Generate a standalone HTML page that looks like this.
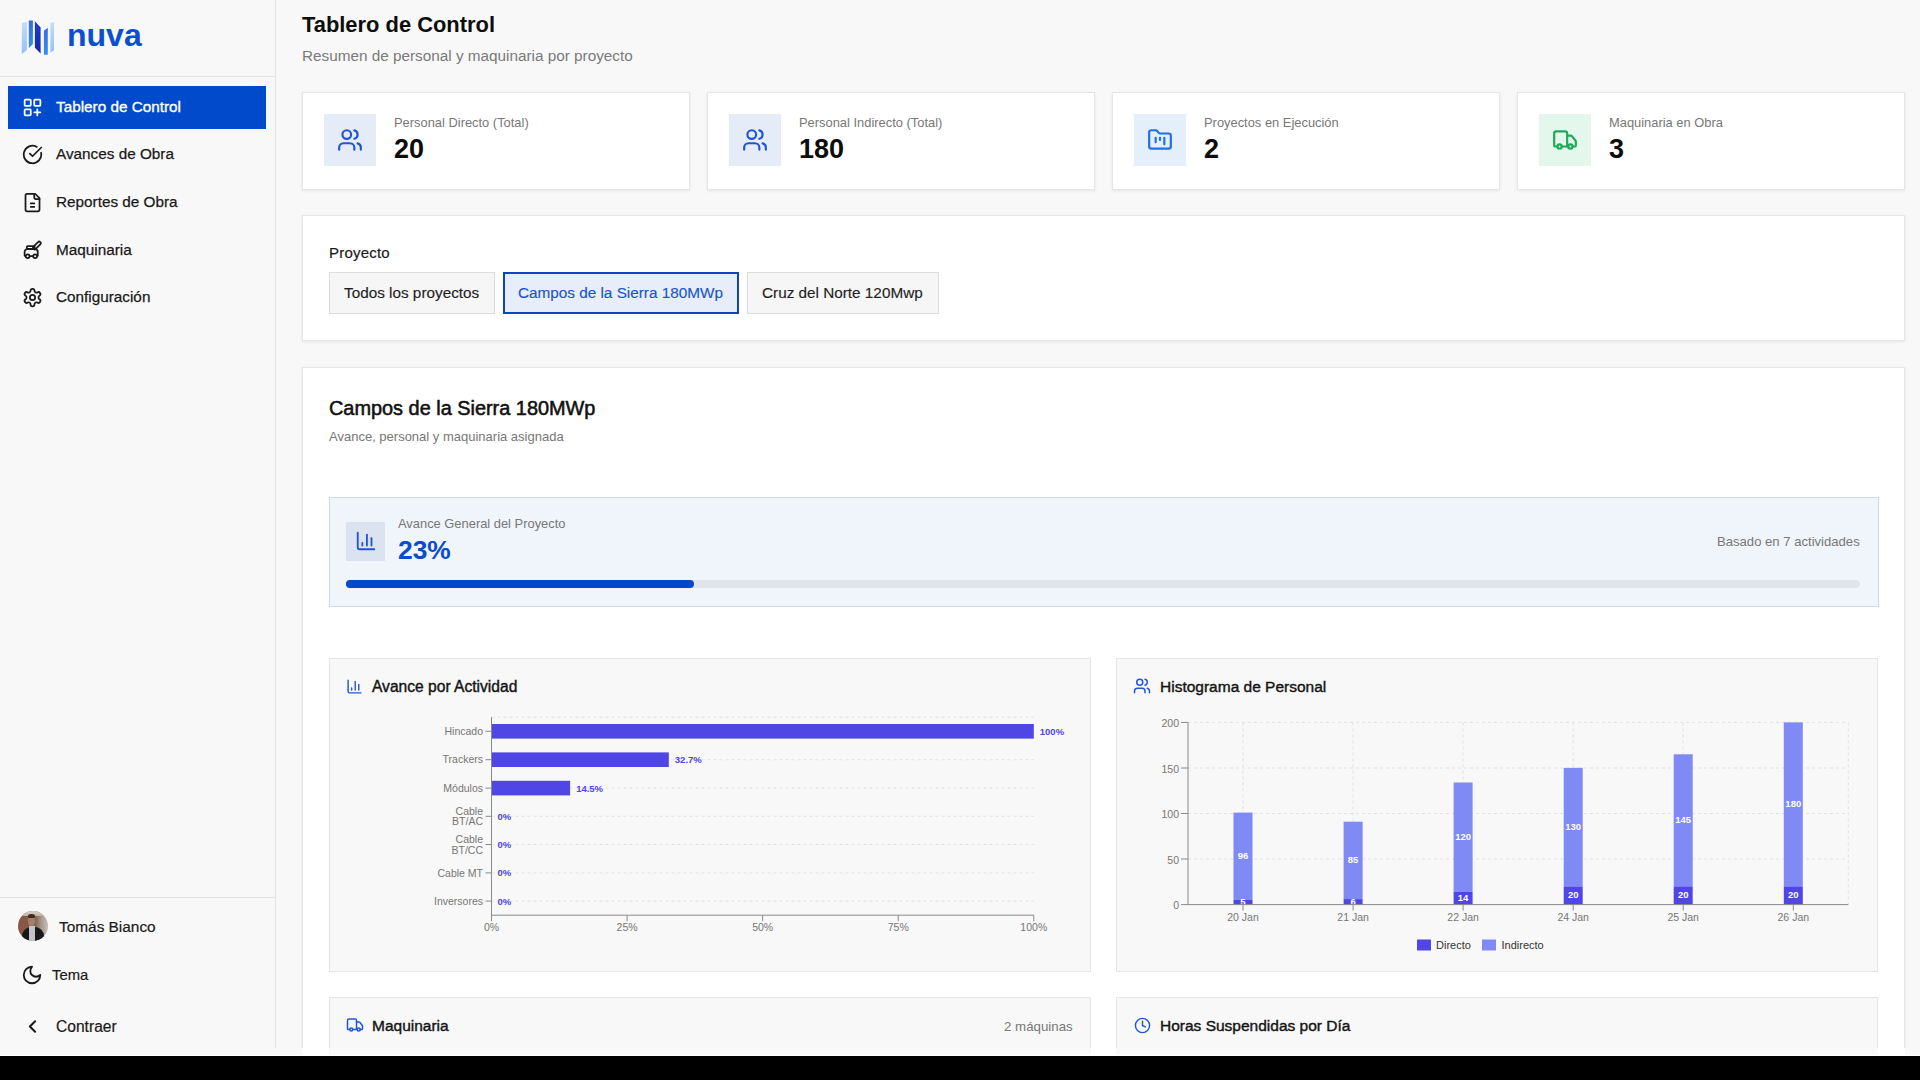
<!DOCTYPE html>
<html lang="es">
<head>
<meta charset="utf-8">
<title>Tablero de Control</title>
<style>
*{box-sizing:border-box;margin:0;padding:0}
html,body{width:1920px;height:1080px;overflow:hidden;background:#000}
body{font-family:"Liberation Sans",sans-serif;color:#141414;position:relative}
.abs{position:absolute}
.app{position:absolute;left:0;top:0;width:1920px;height:1056px;background:#f8f8f8;overflow:hidden}
.side{position:absolute;left:0;top:0;width:276px;height:1048px;border-right:1px solid #e4e4e4;background:#f8f8f8}
.side .hdr{position:absolute;left:0;top:0;width:275px;height:77px;border-bottom:1px solid #e4e4e4}
.nav{position:absolute;left:8px;width:258px;height:43px;color:#1a1a1a;font-size:15.3px;white-space:nowrap}
.nav svg{position:absolute;left:13.5px;top:11px;width:21px;height:21px}
.nav span{position:absolute;left:48px;top:12px;line-height:18px;-webkit-text-stroke:0.25px currentColor}
.nav.act span{-webkit-text-stroke:0.35px currentColor}
.nav.act{background:#004acb;color:#fff}
.txt{position:absolute;white-space:nowrap;line-height:1}
.card{position:absolute;background:#fff;border:1px solid #e6e6e6;box-shadow:0 1px 3px rgba(0,0,0,.08)}
.kpi{top:92px;width:388px;height:98px}
.kpi .ib{position:absolute;left:21px;top:21px;width:52px;height:52px;background:#e5ebf7}
.kpi .ib svg{position:absolute;left:13px;top:13px;width:26px;height:26px}
.kpi .lb{position:absolute;left:91px;top:22px;font-size:12.9px;color:#777;white-space:nowrap;line-height:15px}
.kpi .vl{position:absolute;left:91px;top:41px;font-size:27px;font-weight:700;color:#0d0d0d;white-space:nowrap;line-height:30px}
.btn{position:absolute;top:272px;height:42px;background:#f6f6f6;border:1px solid #dcdcdc;font-size:15.3px;color:#1f1f1f;white-space:nowrap;line-height:40px;padding-left:14px;-webkit-text-stroke:0.15px currentColor}
.btn.act{background:#e8eef9;border:2px solid #0b45c2;color:#1a55c8;line-height:38px;padding-left:13px}
</style>
</head>
<body>
<div class="app">
  <!-- SIDEBAR -->
  <div class="side">
    <div class="hdr">
      <svg class="abs" style="left:20px;top:19px" width="35" height="37" viewBox="0 0 35 37">
        <defs>
          <linearGradient id="lg1" x1="0" y1="0" x2="0" y2="1"><stop offset="0" stop-color="#c4defa"/><stop offset="1" stop-color="#94c0f6"/></linearGradient>
          <linearGradient id="lg2" x1="0" y1="0" x2="0" y2="1"><stop offset="0" stop-color="#2f6fe3"/><stop offset="1" stop-color="#3a8af0"/></linearGradient>
          <linearGradient id="lg3" x1="0" y1="0" x2="0" y2="1"><stop offset="0" stop-color="#1c3fc4"/><stop offset="1" stop-color="#1426a8"/></linearGradient>
        </defs>
        <polygon points="2,4 7,3.1 7,31 1.7,35" fill="url(#lg1)"/>
        <polygon points="8.8,1.5 12.9,1.5 12.9,25.1 8.8,29.2" fill="url(#lg2)"/>
        <polygon points="14.9,2.3 20.6,8.4 20.6,34.5 14.9,28.8" fill="url(#lg3)"/>
        <polygon points="23.9,11.7 27.8,8.8 27.8,35.7 23.9,35.7" fill="url(#lg2)"/>
        <polygon points="30.4,4 34,3.1 34,31 30.4,33.7" fill="url(#lg1)"/>
      </svg>
      <div class="txt" style="left:67px;top:19px;font-size:32px;font-weight:700;color:#0a4fd0;letter-spacing:0">nuva</div>
    </div>
    <div class="nav act" style="top:86px">
      <svg viewBox="0 0 24 24" fill="none" stroke="#fff" stroke-width="2" stroke-linecap="round" stroke-linejoin="round"><rect x="3" y="3" width="7" height="7" rx="1"/><rect x="14" y="3" width="7" height="7" rx="1"/><rect x="3" y="14" width="7" height="7" rx="1"/><path d="M14 17.5h7M17.5 14v7"/></svg>
      <span>Tablero de Control</span>
    </div>
    <div class="nav" style="top:133px">
      <svg viewBox="0 0 24 24" fill="none" stroke="#1a1a1a" stroke-width="2" stroke-linecap="round" stroke-linejoin="round"><path d="M21.8 10A10 10 0 1 1 17 3.34"/><path d="m9 11 3 3L22 4"/></svg>
      <span>Avances de Obra</span>
    </div>
    <div class="nav" style="top:181px">
      <svg viewBox="0 0 24 24" fill="none" stroke="#1a1a1a" stroke-width="2" stroke-linecap="round" stroke-linejoin="round"><path d="M15 2H6a2 2 0 0 0-2 2v16a2 2 0 0 0 2 2h12a2 2 0 0 0 2-2V7Z"/><path d="M14 2v4a2 2 0 0 0 2 2h4"/><path d="M10 13h4M10 17h4"/></svg>
      <span>Reportes de Obra</span>
    </div>
    <div class="nav" style="top:228.5px">
      <svg viewBox="0 0 24 24" fill="none" stroke="#1a1a1a" stroke-width="2" stroke-linecap="round" stroke-linejoin="round"><rect x="5.5" y="7" width="9" height="3" rx="1"/><path d="M3 18v-4.5a3 3 0 0 1 3-3h9a3 3 0 0 1 3 3V18"/><circle cx="6.5" cy="18.5" r="2.2"/><circle cx="15" cy="18.5" r="2.2"/><path d="M8.7 18.5h4"/><rect x="15.2" y="0.8" width="3.6" height="11" rx="1.8" transform="rotate(45 17 6.3)"/></svg>
      <span>Maquinaria</span>
    </div>
    <div class="nav" style="top:275.5px">
      <svg viewBox="0 0 24 24" fill="none" stroke="#1a1a1a" stroke-width="2" stroke-linecap="round" stroke-linejoin="round"><path d="M12.22 2h-.44a2 2 0 0 0-2 2v.18a2 2 0 0 1-1 1.73l-.43.25a2 2 0 0 1-2 0l-.15-.08a2 2 0 0 0-2.73.73l-.22.38a2 2 0 0 0 .73 2.73l.15.1a2 2 0 0 1 1 1.72v.51a2 2 0 0 1-1 1.74l-.15.09a2 2 0 0 0-.73 2.73l.22.38a2 2 0 0 0 2.73.73l.15-.08a2 2 0 0 1 2 0l.43.25a2 2 0 0 1 1 1.73V20a2 2 0 0 0 2 2h.44a2 2 0 0 0 2-2v-.18a2 2 0 0 1 1-1.73l.43-.25a2 2 0 0 1 2 0l.15.08a2 2 0 0 0 2.73-.73l.22-.39a2 2 0 0 0-.73-2.73l-.15-.08a2 2 0 0 1-1-1.74v-.5a2 2 0 0 1 1-1.74l.15-.09a2 2 0 0 0 .73-2.73l-.22-.38a2 2 0 0 0-2.73-.73l-.15.08a2 2 0 0 1-2 0l-.43-.25a2 2 0 0 1-1-1.73V4a2 2 0 0 0-2-2z"/><circle cx="12" cy="12" r="3"/></svg>
      <span>Configuración</span>
    </div>
    <!-- bottom -->
    <div class="abs" style="left:0;top:897px;width:275px;border-top:1px solid #e4e4e4"></div>
    
    <div class="abs" style="left:17.5px;top:911px;width:30px;height:30px;border-radius:50%;overflow:hidden;background:linear-gradient(90deg,#8c5646 0,#7d5a48 55%,#a89a8e 78%,#c4bdb6 100%)"><div class="abs" style="left:0;top:0;width:30px;height:30px;filter:blur(0.5px)">
      <div class="abs" style="left:0;top:0;width:30px;height:5px;background:linear-gradient(180deg,#d8d2ca,#bfb0a2)"></div>
      <div class="abs" style="left:10.5px;top:5px;width:7px;height:10px;border-radius:40%;background:#a47e68"></div>
      <div class="abs" style="left:10.5px;top:2.5px;width:7px;height:4px;border-radius:50% 50% 20% 20%;background:#3b2b22"></div>
      <div class="abs" style="left:4px;top:15.5px;width:22px;height:16px;border-radius:9px 9px 0 0;background:#19191d"></div>
      <div class="abs" style="left:11.5px;top:15px;width:5.5px;height:16px;background:#c4c4c8"></div>
    </div></div>
    <div class="txt" style="left:59px;top:919px;font-size:15.4px;color:#1a1a1a;-webkit-text-stroke:0.2px #1a1a1a">Tomás Bianco</div>
    <svg class="abs" style="left:21px;top:963.5px" width="22" height="22" viewBox="0 0 24 24" fill="none" stroke="#1a1a1a" stroke-width="2" stroke-linecap="round" stroke-linejoin="round"><path d="M12 3a6 6 0 0 0 9 9 9 9 0 1 1-9-9Z"/></svg>
    <div class="txt" style="left:52px;top:968px;font-size:14.8px;color:#1a1a1a;-webkit-text-stroke:0.2px #1a1a1a">Tema</div>
    <svg class="abs" style="left:21.5px;top:1016px" width="21" height="21" viewBox="0 0 24 24" fill="none" stroke="#1a1a1a" stroke-width="2.3" stroke-linecap="round" stroke-linejoin="round"><path d="m15 18-6-6 6-6"/></svg>
    <div class="txt" style="left:56px;top:1019px;font-size:15.6px;color:#1a1a1a;-webkit-text-stroke:0.2px #1a1a1a">Contraer</div>

  </div>

  <!-- HEADER -->
  <div class="txt" style="left:302px;top:14px;font-size:21.9px;font-weight:700;color:#0d0d0d">Tablero de Control</div>
  <div class="txt" style="left:302px;top:48px;font-size:15.3px;color:#7a7a7a">Resumen de personal y maquinaria por proyecto</div>

  <!-- KPI CARDS -->
  
  <div class="card kpi" style="left:302px"><div class="ib"><svg viewBox="0 0 24 24" fill="none" stroke="#1f56d6" stroke-width="2" stroke-linecap="round" stroke-linejoin="round"><path d="M16 21v-2a4 4 0 0 0-4-4H6a4 4 0 0 0-4 4v2"/><circle cx="9" cy="7" r="4"/><path d="M22 21v-2a4 4 0 0 0-3-3.87"/><path d="M16 3.13a4 4 0 0 1 0 7.75"/></svg></div><div class="lb">Personal Directo (Total)</div><div class="vl">20</div></div>
  <div class="card kpi" style="left:707px"><div class="ib"><svg viewBox="0 0 24 24" fill="none" stroke="#1f56d6" stroke-width="2" stroke-linecap="round" stroke-linejoin="round"><path d="M16 21v-2a4 4 0 0 0-4-4H6a4 4 0 0 0-4 4v2"/><circle cx="9" cy="7" r="4"/><path d="M22 21v-2a4 4 0 0 0-3-3.87"/><path d="M16 3.13a4 4 0 0 1 0 7.75"/></svg></div><div class="lb">Personal Indirecto (Total)</div><div class="vl">180</div></div>
  <div class="card kpi" style="left:1112px"><div class="ib" style="background:#e5eefb"><svg viewBox="0 0 24 24" fill="none" stroke="#1f6fe6" stroke-width="2" stroke-linecap="round" stroke-linejoin="round"><path d="M4 20h16a2 2 0 0 0 2-2V8a2 2 0 0 0-2-2h-7.93a2 2 0 0 1-1.66-.9l-.82-1.2A2 2 0 0 0 7.93 3H4a2 2 0 0 0-2 2v13c0 1.1.9 2 2 2Z"/><path d="M8 10v4M12 10v2M16 10v6"/></svg></div><div class="lb">Proyectos en Ejecución</div><div class="vl">2</div></div>
  <div class="card kpi" style="left:1517px"><div class="ib" style="background:#e3f7ed"><svg viewBox="0 0 24 24" fill="none" stroke="#1faa58" stroke-width="2" stroke-linecap="round" stroke-linejoin="round"><path d="M14 18V6a2 2 0 0 0-2-2H4a2 2 0 0 0-2 2v11a1 1 0 0 0 1 1h2"/><path d="M15 18H9"/><path d="M19 18h2a1 1 0 0 0 1-1v-3.65a1 1 0 0 0-.22-.62L18.3 8.38A1 1 0 0 0 17.52 8H14"/><circle cx="17" cy="18" r="2"/><circle cx="7" cy="18" r="2"/></svg></div><div class="lb">Maquinaria en Obra</div><div class="vl">3</div></div>


  <!-- FILTER -->
  
  <div class="card" style="left:302px;top:215px;width:1603px;height:126px"></div>
  <div class="txt" style="left:329px;top:244.5px;font-size:15px;letter-spacing:0.2px;color:#1a1a1a;-webkit-text-stroke:0.2px #1a1a1a">Proyecto</div>
  <div class="btn" style="left:329px;width:166px">Todos los proyectos</div>
  <div class="btn act" style="left:503px;width:236px">Campos de la Sierra 180MWp</div>
  <div class="btn" style="left:747px;width:192px">Cruz del Norte 120Mwp</div>


  <!-- SECTION -->
  
  <div class="card" style="left:302px;top:367px;width:1603px;height:720px"></div>
  <div class="txt" style="left:329px;top:398.5px;font-size:19.9px;color:#111;-webkit-text-stroke:0.55px #111">Campos de la Sierra 180MWp</div>
  <div class="txt" style="left:329px;top:430px;font-size:13px;color:#777">Avance, personal y maquinaria asignada</div>
  <!-- progress panel -->
  <div class="abs" style="left:329px;top:497px;width:1550px;height:110px;background:#f0f4fb;border:1px solid #ccd8ea"></div>
  <div class="abs" style="left:346px;top:522px;width:39px;height:39px;background:#dbe3f0"></div>
  <svg class="abs" style="left:355px;top:530px" width="22" height="22" viewBox="0 0 24 24" fill="none" stroke="#1f56d6" stroke-width="2" stroke-linecap="round" stroke-linejoin="round"><path d="M3 3v16a2 2 0 0 0 2 2h16"/><path d="M18 17V9"/><path d="M13 17V5"/><path d="M8 17v-3"/></svg>
  <div class="txt" style="left:398px;top:517.5px;font-size:12.9px;color:#777">Avance General del Proyecto</div>
  <div class="txt" style="left:398px;top:537px;font-size:26.4px;font-weight:700;color:#0b4bcf">23%</div>
  <div class="txt" style="left:1717px;top:534.5px;font-size:13.1px;color:#777">Basado en 7 actividades</div>
  <div class="abs" style="left:346px;top:580px;width:1514px;height:8px;border-radius:4px;background:#e1e4ea"></div>
  <div class="abs" style="left:346px;top:580px;width:348px;height:8px;border-radius:4px;background:#0448cc"></div>
  <!-- chart cards -->
  <div class="abs" style="left:329px;top:658px;width:762px;height:314px;background:#f8f8f8;border:1px solid #e5e5e5"></div>
  <div class="abs" style="left:1116px;top:658px;width:762px;height:314px;background:#f8f8f8;border:1px solid #e5e5e5"></div>
  <svg class="abs" style="left:346px;top:678px" width="17" height="17" viewBox="0 0 24 24" fill="none" stroke="#1f56d6" stroke-width="2" stroke-linecap="round" stroke-linejoin="round"><path d="M3 3v16a2 2 0 0 0 2 2h16"/><path d="M18 17V9"/><path d="M13 17V5"/><path d="M8 17v-3"/></svg>
  <div class="txt" style="left:372px;top:679px;font-size:15.6px;color:#141414;-webkit-text-stroke:0.4px #141414">Avance por Actividad</div>
  <svg class="abs" style="left:1133px;top:677px" width="18" height="18" viewBox="0 0 24 24" fill="none" stroke="#1f56d6" stroke-width="2" stroke-linecap="round" stroke-linejoin="round"><path d="M16 21v-2a4 4 0 0 0-4-4H6a4 4 0 0 0-4 4v2"/><circle cx="9" cy="7" r="4"/><path d="M22 21v-2a4 4 0 0 0-3-3.87"/><path d="M16 3.13a4 4 0 0 1 0 7.75"/></svg>
  <div class="txt" style="left:1160px;top:679px;font-size:15.5px;color:#141414;-webkit-text-stroke:0.4px #141414">Histograma de Personal</div>
  <!-- bottom cards -->
  <div class="abs" style="left:329px;top:997px;width:762px;height:80px;background:#f8f8f8;border:1px solid #e5e5e5"></div>
  <div class="abs" style="left:1116px;top:997px;width:762px;height:80px;background:#f8f8f8;border:1px solid #e5e5e5"></div>
  <svg class="abs" style="left:346px;top:1016px" width="18" height="18" viewBox="0 0 24 24" fill="none" stroke="#1f56d6" stroke-width="2" stroke-linecap="round" stroke-linejoin="round"><path d="M14 18V6a2 2 0 0 0-2-2H4a2 2 0 0 0-2 2v11a1 1 0 0 0 1 1h2"/><path d="M15 18H9"/><path d="M19 18h2a1 1 0 0 0 1-1v-3.65a1 1 0 0 0-.22-.62L18.3 8.38A1 1 0 0 0 17.52 8H14"/><circle cx="17" cy="18" r="2"/><circle cx="7" cy="18" r="2"/></svg>
  <div class="txt" style="left:372px;top:1017.5px;font-size:15.5px;color:#141414;-webkit-text-stroke:0.4px #141414">Maquinaria</div>
  <div class="txt" style="left:1004px;top:1020px;font-size:13.3px;color:#777">2 máquinas</div>
  <svg class="abs" style="left:1134px;top:1017px" width="17" height="17" viewBox="0 0 24 24" fill="none" stroke="#1f56d6" stroke-width="2" stroke-linecap="round" stroke-linejoin="round"><circle cx="12" cy="12" r="10"/><path d="M12 6v6l4 2"/></svg>
  <div class="txt" style="left:1160px;top:1017.5px;font-size:15.5px;color:#141414;-webkit-text-stroke:0.4px #141414">Horas Suspendidas por Día</div>
  <svg class="abs" style="left:0;top:0" width="1920" height="1056" viewBox="0 0 1920 1056"><style>.grid{stroke:#e2e2e2;stroke-width:1;stroke-dasharray:3 3}.axis{stroke:#8a8a8a;stroke-width:1}.tick{font-family:"Liberation Sans";font-size:10.5px;fill:#767676}.vlab{font-family:"Liberation Sans";font-size:9.5px;font-weight:700;fill:#4f46e5}.ilab{font-family:"Liberation Sans";font-size:9.5px;font-weight:700;fill:#fff}.leg{font-family:"Liberation Sans";font-size:11px;fill:#333}</style><line x1="491.5" y1="717.2" x2="1033.8" y2="717.2" class="grid"/><line x1="491.5" y1="731.3" x2="1033.8" y2="731.3" class="grid"/><line x1="491.5" y1="759.7" x2="1033.8" y2="759.7" class="grid"/><line x1="491.5" y1="788.1" x2="1033.8" y2="788.1" class="grid"/><line x1="491.5" y1="816.3" x2="1033.8" y2="816.3" class="grid"/><line x1="491.5" y1="844.5" x2="1033.8" y2="844.5" class="grid"/><line x1="491.5" y1="872.9" x2="1033.8" y2="872.9" class="grid"/><line x1="491.5" y1="901.1" x2="1033.8" y2="901.1" class="grid"/><rect x="491.5" y="724.0" width="542.3" height="14.6" fill="#4f46e5"/><text x="1039.8" y="734.6999999999999" class="vlab">100%</text><line x1="485.5" y1="731.3" x2="491.5" y2="731.3" class="axis"/><text x="483" y="735.0" class="tick" text-anchor="end">Hincado</text><rect x="491.5" y="752.4000000000001" width="177.3" height="14.6" fill="#4f46e5"/><text x="674.8321" y="763.1" class="vlab">32.7%</text><line x1="485.5" y1="759.7" x2="491.5" y2="759.7" class="axis"/><text x="483" y="763.4000000000001" class="tick" text-anchor="end">Trackers</text><rect x="491.5" y="780.8000000000001" width="78.6" height="14.6" fill="#4f46e5"/><text x="576.1335" y="791.5" class="vlab">14.5%</text><line x1="485.5" y1="788.1" x2="491.5" y2="788.1" class="axis"/><text x="483" y="791.8000000000001" class="tick" text-anchor="end">Módulos</text><text x="497.5" y="819.6999999999999" class="vlab">0%</text><line x1="485.5" y1="816.3" x2="491.5" y2="816.3" class="axis"/><text x="483" y="814.6999999999999" class="tick" text-anchor="end">Cable</text><text x="483" y="825.3" class="tick" text-anchor="end">BT/AC</text><text x="497.5" y="847.9" class="vlab">0%</text><line x1="485.5" y1="844.5" x2="491.5" y2="844.5" class="axis"/><text x="483" y="842.9" class="tick" text-anchor="end">Cable</text><text x="483" y="853.5" class="tick" text-anchor="end">BT/CC</text><text x="497.5" y="876.3" class="vlab">0%</text><line x1="485.5" y1="872.9" x2="491.5" y2="872.9" class="axis"/><text x="483" y="876.6" class="tick" text-anchor="end">Cable MT</text><text x="497.5" y="904.5" class="vlab">0%</text><line x1="485.5" y1="901.1" x2="491.5" y2="901.1" class="axis"/><text x="483" y="904.8000000000001" class="tick" text-anchor="end">Inversores</text><line x1="491.5" y1="717.2" x2="491.5" y2="915.2" class="axis"/><line x1="491.5" y1="915.2" x2="1033.8" y2="915.2" class="axis"/><line x1="491.5" y1="915.2" x2="491.5" y2="921.2" class="axis"/><text x="491.5" y="931.2" class="tick" text-anchor="middle">0%</text><line x1="627.075" y1="915.2" x2="627.075" y2="921.2" class="axis"/><text x="627.075" y="931.2" class="tick" text-anchor="middle">25%</text><line x1="762.65" y1="915.2" x2="762.65" y2="921.2" class="axis"/><text x="762.65" y="931.2" class="tick" text-anchor="middle">50%</text><line x1="898.2249999999999" y1="915.2" x2="898.2249999999999" y2="921.2" class="axis"/><text x="898.2249999999999" y="931.2" class="tick" text-anchor="middle">75%</text><line x1="1033.8" y1="915.2" x2="1033.8" y2="921.2" class="axis"/><text x="1033.8" y="931.2" class="tick" text-anchor="middle">100%</text><line x1="1188.0" y1="859.0" x2="1848.3" y2="859.0" class="grid"/><line x1="1188.0" y1="813.5" x2="1848.3" y2="813.5" class="grid"/><line x1="1188.0" y1="768.0" x2="1848.3" y2="768.0" class="grid"/><line x1="1188.0" y1="722.4" x2="1848.3" y2="722.4" class="grid"/><line x1="1243.0" y1="722.4" x2="1243.0" y2="904.6" class="grid"/><line x1="1353.1" y1="722.4" x2="1353.1" y2="904.6" class="grid"/><line x1="1463.1" y1="722.4" x2="1463.1" y2="904.6" class="grid"/><line x1="1573.2" y1="722.4" x2="1573.2" y2="904.6" class="grid"/><line x1="1683.2" y1="722.4" x2="1683.2" y2="904.6" class="grid"/><line x1="1793.3" y1="722.4" x2="1793.3" y2="904.6" class="grid"/><line x1="1848.3" y1="722.4" x2="1848.3" y2="904.6" class="grid"/><rect x="1233.5" y="812.6" width="19" height="87.5" fill="#7f8af5"/><rect x="1233.5" y="900.0" width="19" height="4.6" fill="#4f46e5"/><text x="1243.0" y="859.1" class="ilab" text-anchor="middle">96</text><text x="1243.0" y="905.1" class="ilab" text-anchor="middle">5</text><line x1="1243.0" y1="904.6" x2="1243.0" y2="910.6" class="axis"/><text x="1243.0" y="920.6" class="tick" text-anchor="middle">20 Jan</text><rect x="1343.6" y="821.7" width="19" height="77.4" fill="#7f8af5"/><rect x="1343.6" y="899.1" width="19" height="5.5" fill="#4f46e5"/><text x="1353.1" y="863.2" class="ilab" text-anchor="middle">85</text><text x="1353.1" y="904.7" class="ilab" text-anchor="middle">6</text><line x1="1353.1" y1="904.6" x2="1353.1" y2="910.6" class="axis"/><text x="1353.1" y="920.6" class="tick" text-anchor="middle">21 Jan</text><rect x="1453.6" y="782.5" width="19" height="109.3" fill="#7f8af5"/><rect x="1453.6" y="891.8" width="19" height="12.8" fill="#4f46e5"/><text x="1463.1" y="840.0" class="ilab" text-anchor="middle">120</text><text x="1463.1" y="901.0" class="ilab" text-anchor="middle">14</text><line x1="1463.1" y1="904.6" x2="1463.1" y2="910.6" class="axis"/><text x="1463.1" y="920.6" class="tick" text-anchor="middle">22 Jan</text><rect x="1563.7" y="767.9" width="19" height="118.4" fill="#7f8af5"/><rect x="1563.7" y="886.4" width="19" height="18.2" fill="#4f46e5"/><text x="1573.2" y="830.0" class="ilab" text-anchor="middle">130</text><text x="1573.2" y="898.3" class="ilab" text-anchor="middle">20</text><line x1="1573.2" y1="904.6" x2="1573.2" y2="910.6" class="axis"/><text x="1573.2" y="920.6" class="tick" text-anchor="middle">24 Jan</text><rect x="1673.7" y="754.3" width="19" height="132.1" fill="#7f8af5"/><rect x="1673.7" y="886.4" width="19" height="18.2" fill="#4f46e5"/><text x="1683.2" y="823.1" class="ilab" text-anchor="middle">145</text><text x="1683.2" y="898.3" class="ilab" text-anchor="middle">20</text><line x1="1683.2" y1="904.6" x2="1683.2" y2="910.6" class="axis"/><text x="1683.2" y="920.6" class="tick" text-anchor="middle">25 Jan</text><rect x="1783.8" y="722.4" width="19" height="164.0" fill="#7f8af5"/><rect x="1783.8" y="886.4" width="19" height="18.2" fill="#4f46e5"/><text x="1793.3" y="807.2" class="ilab" text-anchor="middle">180</text><text x="1793.3" y="898.3" class="ilab" text-anchor="middle">20</text><line x1="1793.3" y1="904.6" x2="1793.3" y2="910.6" class="axis"/><text x="1793.3" y="920.6" class="tick" text-anchor="middle">26 Jan</text><line x1="1188.0" y1="722.4" x2="1188.0" y2="904.6" class="axis"/><line x1="1188.0" y1="904.6" x2="1848.3" y2="904.6" class="axis"/><line x1="1181.0" y1="904.6" x2="1188.0" y2="904.6" class="axis"/><text x="1179.0" y="909.4" class="tick" text-anchor="end">0</text><line x1="1181.0" y1="859.0" x2="1188.0" y2="859.0" class="axis"/><text x="1179.0" y="863.8" class="tick" text-anchor="end">50</text><line x1="1181.0" y1="813.5" x2="1188.0" y2="813.5" class="axis"/><text x="1179.0" y="818.3" class="tick" text-anchor="end">100</text><line x1="1181.0" y1="768.0" x2="1188.0" y2="768.0" class="axis"/><text x="1179.0" y="772.8" class="tick" text-anchor="end">150</text><line x1="1181.0" y1="722.4" x2="1188.0" y2="722.4" class="axis"/><text x="1179.0" y="727.2" class="tick" text-anchor="end">200</text><rect x="1417" y="939.5" width="14" height="11" fill="#4f46e5"/><text x="1436" y="948.8" class="leg">Directo</text><rect x="1482" y="939.5" width="14" height="11" fill="#7f8af5"/><text x="1501.5" y="948.8" class="leg">Indirecto</text></svg>

  <div class="abs" style="left:0;top:1048px;width:1920px;height:7px;background:linear-gradient(90deg,#f8f8f8 0,#f8f8f8 302px,#fff 302px,#fff 329px,#f9f9f9 329px,#f9f9f9 1091px,#fff 1091px,#fff 1116px,#f9f9f9 1116px,#f9f9f9 1878px,#fff 1878px,#fff 1905px,#f8f8f8 1905px)"></div>
  <div class="abs" style="left:0;top:1055px;width:1920px;height:1px;background:#fff"></div>
</div>
</body>
</html>
